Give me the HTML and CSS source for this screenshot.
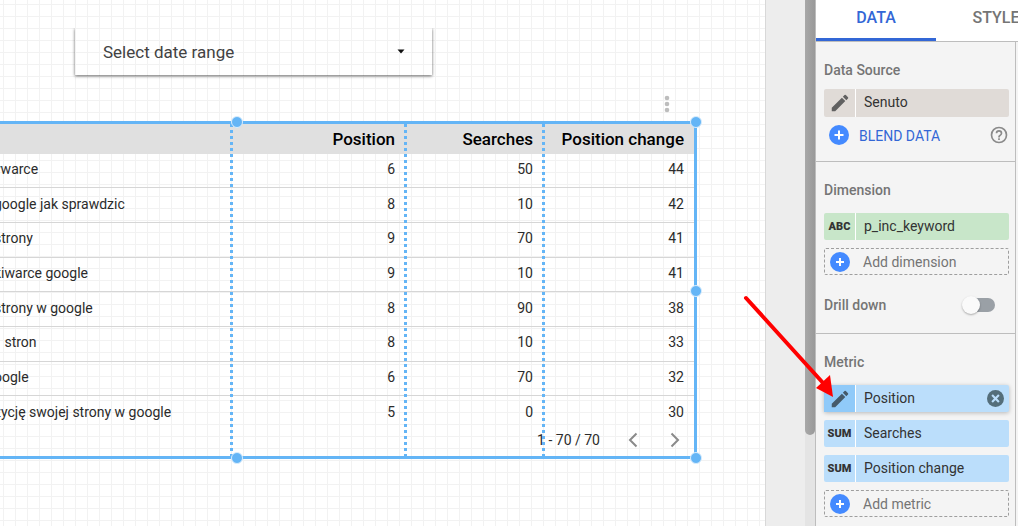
FILE: index.html
```html
<!DOCTYPE html>
<html lang="en">
<head>
    <meta charset="UTF-8">
    <meta name="viewport" content="width=device-width, initial-scale=1.0">
    <title>Report editor</title>
    <link rel="stylesheet" href="styles.css">
</head>
<body>
    <div class="editor">
        <!-- Report canvas -->
        <main class="workspace">
            <div class="page">
                <button class="date-range" type="button">
                    <span>Select date range</span>
                    <svg class="caret" viewBox="0 0 8 5"><path d="M0.500 0.500H7.500L4 4.500z"/></svg>
                </button>

                <div class="chart-menu">
                    <button class="more" type="button" aria-label="More">
                        <svg viewBox="0 0 6 18"><circle cx="3" cy="3" r="2.300"/><circle cx="3" cy="9" r="2.300"/><circle cx="3" cy="15" r="2.300"/></svg>
                    </button>
                </div>

                <section class="chart">
                    <table class="data">
                        <colgroup>
                            <col class="col-keyword">
                            <col class="col-position">
                            <col class="col-searches">
                            <col class="col-change">
                        </colgroup>
                        <thead>
                            <tr><th></th><th>Position</th><th>Searches</th><th>Position change</th></tr>
                        </thead>
                        <tbody>
                            <tr><td>ywarce</td><td>6</td><td>50</td><td>44</td></tr>
                            <tr><td>google jak sprawdzic</td><td>8</td><td>10</td><td>42</td></tr>
                            <tr><td>strony</td><td>9</td><td>70</td><td>41</td></tr>
                            <tr><td>kiwarce google</td><td>9</td><td>10</td><td>41</td></tr>
                            <tr><td>strony w google</td><td>8</td><td>90</td><td>38</td></tr>
                            <tr><td>&nbsp;&nbsp;&nbsp;stron</td><td>8</td><td>10</td><td>33</td></tr>
                            <tr><td>oogle</td><td>6</td><td>70</td><td>32</td></tr>
                            <tr><td>zycję swojej strony w google</td><td>5</td><td>0</td><td>30</td></tr>
                        </tbody>
                    </table>
                    <div class="pager">
                        <span>1 - 70 / 70</span>
                        <button type="button" aria-label="Previous"><svg viewBox="0 0 10 16"><path d="M8.500 1.500L2 8l6.500 6.500"/></svg></button>
                        <button type="button" aria-label="Next"><svg viewBox="0 0 10 16"><path d="M1.500 1.500L8 8l-6.500 6.500"/></svg></button>
                    </div>

                    <!-- Column resize guides and selection handles -->
                    <i class="guide guide-1"></i>
                    <i class="guide guide-2"></i>
                    <i class="guide guide-3"></i>
                    <i class="handle top mid"></i>
                    <i class="handle top right"></i>
                    <i class="handle center right"></i>
                    <i class="handle bottom right"></i>
                    <i class="handle bottom mid"></i>
                </section>
            </div>
            <div class="scrollbar"><div class="thumb"></div></div>
        </main>

        <!-- Properties panel -->
        <aside class="panel">
            <nav class="tabs">
                <a class="tab active" href="#data">DATA</a>
                <a class="tab" href="#style">STYLE</a>
            </nav>
            <div class="panel-body">
                <section class="group source">
                    <h2>Data Source</h2>
                    <button class="chip beige" type="button">
                        <span class="chip-type"><svg class="pencil" viewBox="0 0 24 24"><path d="M3 17.250V21h3.750L17.810 9.940l-3.750-3.750zM20.710 7.040a1 1 0 0 0 0-1.410l-2.340-2.340a1 1 0 0 0-1.410 0l-1.830 1.830 3.750 3.750z"/></svg></span>
                        <span class="chip-name">Senuto</span>
                    </button>
                    <div class="blend">
                        <svg class="plus" viewBox="0 0 20 20"><circle cx="10" cy="10" r="10"/><path d="M10 5.500v9M5.500 10h9"/></svg>
                        <a href="#blend">BLEND DATA</a>
                        <svg class="help" viewBox="0 0 24 24"><path d="M11 18h2v-2h-2zM12 2a10 10 0 1 0 0 20 10 10 0 0 0 0-20zm0 18a8 8 0 1 1 0-16 8 8 0 0 1 0 16zm0-14a4 4 0 0 0-4 4h2a2 2 0 1 1 4 0c0 2-3 1.750-3 5h2c0-2.250 3-2.500 3-5a4 4 0 0 0-4-4z"/></svg>
                    </div>
                </section>

                <section class="group dimension">
                    <h2>Dimension</h2>
                    <button class="chip green" type="button">
                        <span class="chip-type">ABC</span>
                        <span class="chip-name">p_inc_keyword</span>
                    </button>
                    <button class="add" type="button">
                        <svg class="plus" viewBox="0 0 20 20"><circle cx="10" cy="10" r="10"/><path d="M10 6v8M6 10h8"/></svg>
                        <span>Add dimension</span>
                    </button>
                    <label class="drill">Drill down<input class="switch" type="checkbox"></label>
                </section>

                <section class="group metric">
                    <h2>Metric</h2>
                    <div class="chip blue raised">
                        <button class="chip-type" type="button" aria-label="Edit"><svg class="pencil" viewBox="0 0 24 24"><path d="M3 17.250V21h3.750L17.810 9.940l-3.750-3.750zM20.710 7.040a1 1 0 0 0 0-1.410l-2.340-2.340a1 1 0 0 0-1.410 0l-1.830 1.830 3.750 3.750z"/></svg></button>
                        <span class="chip-name">Position</span>
                        <button class="remove" type="button" aria-label="Remove"><svg viewBox="0 0 16 16"><circle cx="8" cy="8" r="8"/><path d="M4.800 4.800l6.400 6.400M11.200 4.800l-6.400 6.400"/></svg></button>
                    </div>
                    <button class="chip blue" type="button">
                        <span class="chip-type">SUM</span>
                        <span class="chip-name">Searches</span>
                    </button>
                    <button class="chip blue" type="button">
                        <span class="chip-type">SUM</span>
                        <span class="chip-name">Position change</span>
                    </button>
                    <button class="add" type="button">
                        <svg class="plus" viewBox="0 0 20 20"><circle cx="10" cy="10" r="10"/><path d="M10 6v8M6 10h8"/></svg>
                        <span>Add metric</span>
                    </button>
                </section>
            </div>
        </aside>

        <!-- Arrow pointing at the metric's edit button -->
        <svg class="arrow" viewBox="0 0 92 104">
            <path class="shaft" d="M3 3L81 89"/>
            <path class="head" d="M90 102L73 93 87 80z"/>
        </svg>
    </div>
</body>
</html>
```
FILE: styles.css
```css
* {
    box-sizing: border-box;
}

body {
    margin: 0;
    font-family: Roboto, "Liberation Sans", Arial, sans-serif;
    font-size: 14px;
    line-height: 20px;
    color: #2b2b2b;
    background: #ededed;
}

button {
    margin: 0;
    padding: 0;
    border: 0;
    background: none;
    font: inherit;
    color: inherit;
    text-align: left;
    cursor: pointer;
}

a {
    text-decoration: none;
}

.editor {
    position: relative;
    display: flex;
    height: 100vh;
    overflow: hidden;
}

/* Report canvas */
.workspace {
    flex: 1;
    display: flex;
    justify-content: space-between;
}

.page {
    flex: 1;
    margin-right: 39px;
    padding-top: 28px;
    border-right: 1px solid #d8d8d8;
    background-color: #fff;
    background-image:
        linear-gradient(to right, #f2f2f2 1px, transparent 1px),
        linear-gradient(to bottom, #f2f2f2 1px, transparent 1px);
    background-size: 12px 12px;
    background-position: 3px 4px;
}

.date-range {
    display: flex;
    align-items: center;
    justify-content: space-between;
    width: 357px;
    height: 47px;
    margin-left: 75px;
    padding: 0 27px 0 28px;
    font-size: 17px;
    color: #424242;
    box-shadow: 0 1px 3px rgba(0, 0, 0, 0.6);
    clip-path: inset(0 -4px -5px -4px);
}

.caret {
    width: 8px;
    height: 5px;
    fill: #111;
}

.chart-menu {
    display: flex;
    align-items: flex-start;
    justify-content: flex-end;
    height: 46px;
    padding: 20px 95px 0 0;
}

.more svg {
    display: block;
    width: 6px;
    height: 18px;
    fill: #bdbdbd;
}

.chart {
    position: relative;
    margin-right: 68px;
    border: 3px solid #64b5f6;
    border-width: 3px 3px 3px 0;
}

.data {
    width: 100%;
    height: 306px;
    table-layout: fixed;
    border-collapse: collapse;
}

.col-keyword {
    width: 232px;
}

.col-position {
    width: 173px;
}

.col-searches {
    width: 138px;
}

.data th,
.data td {
    padding: 0 10px 0 0;
    text-align: right;
    white-space: nowrap;
}

.data th {
    height: 30px;
    background: #e0e0e0;
    font-size: 17px;
    font-weight: 500;
    color: #000;
}

.data td {
    padding-bottom: 3px;
    border-bottom: 1px solid #d6d6d6;
}

/* The keyword column runs out under the left edge of the canvas */
.data td:first-child {
    text-align: left;
    text-indent: -6px;
}

.data tr:last-child td {
    border-bottom: 0;
}

.pager {
    display: flex;
    align-items: center;
    justify-content: flex-end;
    height: 26px;
    padding: 0 14px 6px 0;
}

.pager button {
    margin-left: 28px;
}

.pager button + button {
    margin-left: 32px;
}

.pager svg {
    display: block;
    width: 10px;
    height: 16px;
    fill: none;
    stroke: #8a8a8a;
    stroke-width: 2;
}

.guide {
    position: absolute;
    top: 0;
    bottom: 0;
    width: 3px;
    background: repeating-linear-gradient(to bottom, #64b5f6 0 3px, transparent 3px 6px);
}

.guide-1 {
    left: 230px;
}

.guide-2 {
    left: 404px;
}

.guide-3 {
    left: 542px;
}

.handle {
    position: absolute;
    width: 12px;
    height: 12px;
    border: 1px solid #d9edfd;
    border-radius: 50%;
    background: #64b5f6;
}

.handle.top {
    top: -8px;
}

.handle.center {
    top: 161px;
}

.handle.bottom {
    bottom: -8px;
}

.handle.mid {
    left: 231px;
}

.handle.right {
    right: -8px;
}

.scrollbar {
    width: 10px;
    background: #e4e4e4;
}

.thumb {
    height: 435px;
    border-radius: 0 0 5px 5px;
    background: linear-gradient(to right, #a8a8a8, #999);
}

/* Properties panel */
.panel {
    width: 203px;
    border-left: 1px solid #bdbdbd;
    background: #f4f4f4;
    color: #757575;
}

.tabs {
    display: flex;
    height: 42px;
    border-bottom: 1px solid #bdbdbd;
    background: #fff;
    overflow: hidden;
}

.tab {
    flex: 0 0 120px;
    height: 41px;
    padding-top: 8px;
    text-align: center;
    font-size: 16px;
    font-weight: 500;
    color: #757575;
}

.tab.active {
    border-bottom: 3px solid #3367d6;
    color: #3367d6;
}

.panel-body {
    height: 100%;
    margin-right: 2px;
    border-right: 1px solid #bdbdbd;
}

.group {
    display: flex;
    flex-direction: column;
    padding: 18px 6px 0 8px;
    border-bottom: 1px solid #bdbdbd;
}

.group h2 {
    margin: 0 0 13px;
    font-size: 14px;
    font-weight: 500;
    line-height: 20px;
}

.source {
    height: 120px;
}

.source h2 {
    margin-bottom: 9px;
}

.dimension {
    height: 172px;
}

.metric {
    border-bottom: 0;
}

.chip {
    display: flex;
    align-items: stretch;
    height: 27px;
    margin-bottom: 8px;
    border-radius: 2px;
    color: #333;
}

.chip-type {
    display: flex;
    align-items: center;
    justify-content: center;
    width: 32px;
    border-right: 1px solid #fff;
    font-size: 11px;
    font-weight: 900;
}

.chip-name {
    flex: 1;
    padding: 3px 0 0 8px;
}

.beige {
    height: 28px;
    margin-bottom: 6px;
    background: #e0dbd7;
}

.green {
    background: #c8e6c9;
}

.blue {
    background: #bbdefb;
}

.raised {
    box-shadow: 0 1px 4px rgba(0, 0, 0, 0.25);
}

.raised .chip-type {
    background: #90caf9;
}

.pencil {
    width: 22px;
    height: 22px;
    fill: #616161;
}

.raised .pencil {
    fill: #455a6b;
}

.remove {
    margin-right: 5px;
}

.remove svg {
    display: block;
    width: 17px;
    height: 17px;
    fill: #546e7a;
    stroke: #bbdefb;
    stroke-width: 2;
}

.remove circle {
    stroke: none;
}

.plus {
    width: 20px;
    height: 20px;
    fill: #448aff;
}

.plus path {
    stroke: #fff;
    stroke-width: 2;
}

.blend {
    display: flex;
    align-items: center;
    padding-left: 5px;
}

.blend a {
    flex: 1;
    margin: 3px 0 0 10px;
    color: #3367d6;
}

.help {
    width: 20px;
    height: 20px;
    fill: #8a8a8a;
}

.add {
    display: flex;
    align-items: center;
    gap: 13px;
    height: 27px;
    padding-left: 5px;
    border: 1px dashed #9e9e9e;
    border-radius: 2px;
}

.drill {
    display: flex;
    align-items: center;
    justify-content: space-between;
    margin-top: 20px;
    padding-right: 14px;
    font-weight: 500;
}

.switch {
    appearance: none;
    position: relative;
    width: 32px;
    height: 14px;
    margin: 0;
    border-radius: 7px;
    background: #9aa0a6;
}

.switch::before {
    content: "";
    position: absolute;
    top: -2px;
    left: -1px;
    width: 18px;
    height: 18px;
    border-radius: 50%;
    background: #fafafa;
    box-shadow: 0 1px 2px rgba(0, 0, 0, 0.3);
}

.arrow {
    position: absolute;
    top: 295px;
    right: 183px;
    width: 92px;
    height: 104px;
}

.shaft {
    stroke: #f00;
    stroke-width: 4;
    stroke-linecap: round;
}

.head {
    fill: #f00;
}
```
